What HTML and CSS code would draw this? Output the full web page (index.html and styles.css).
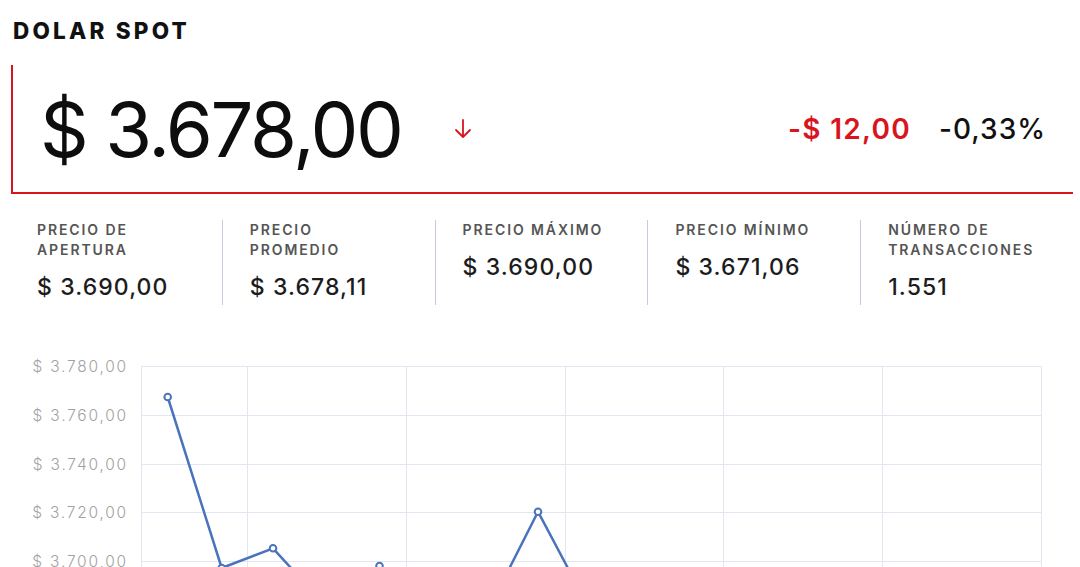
FILE: index.html
```html
<!DOCTYPE html>
<html lang="es">
<head>
    <meta charset="UTF-8">
    <meta name="viewport" content="width=device-width, initial-scale=1.0">
    <title>Dolar Spot</title>
    <link rel="stylesheet" href="styles.css">
</head>
<body>
    <main class="quote">
        <h1 class="quote-title">DOLAR SPOT</h1>

        <section class="price-box">
            <div class="price-main">$ 3.678,00</div>
            <svg class="price-arrow" width="22" height="24" viewBox="0 0 22 24">
                <path d="M11 3 V20 M4 13 L11 20 L18 13" fill="none" stroke="#d8141e" stroke-width="1.8" stroke-linecap="round" stroke-linejoin="round"/>
            </svg>
            <div class="price-change">
                <span class="change-abs">-$ 12,00</span>
                <span class="change-pct">-0,33%</span>
            </div>
        </section>

        <!-- Daily stats -->
        <section class="stats">
            <div class="stat">
                <div class="stat-label">PRECIO DE<br>APERTURA</div>
                <div class="stat-value">$ 3.690,00</div>
            </div>
            <div class="stat">
                <div class="stat-label">PRECIO<br>PROMEDIO</div>
                <div class="stat-value">$ 3.678,11</div>
            </div>
            <div class="stat">
                <div class="stat-label">PRECIO MÁXIMO</div>
                <div class="stat-value">$ 3.690,00</div>
            </div>
            <div class="stat">
                <div class="stat-label">PRECIO MÍNIMO</div>
                <div class="stat-value">$ 3.671,06</div>
            </div>
            <div class="stat">
                <div class="stat-label">NÚMERO DE<br>TRANSACCIONES</div>
                <div class="stat-value">1.551</div>
            </div>
        </section>

        <!-- Intraday chart -->
        <figure class="chart">
            <svg width="1080" height="300" viewBox="0 0 1080 300">
                <g class="grid" stroke="#e3e6f1" stroke-width="1" fill="none">
                    <line x1="141.5" y1="36.5" x2="1041.5" y2="36.5"/>
                    <line x1="141.5" y1="85.5" x2="1041.5" y2="85.5"/>
                    <line x1="141.5" y1="134.5" x2="1041.5" y2="134.5"/>
                    <line x1="141.5" y1="182.5" x2="1041.5" y2="182.5"/>
                    <line x1="141.5" y1="231.5" x2="1041.5" y2="231.5"/>
                    <line x1="141.5" y1="280.5" x2="1041.5" y2="280.5"/>
                    <line x1="141.5" y1="36.5" x2="141.5" y2="300"/>
                    <line x1="247.5" y1="36.5" x2="247.5" y2="300"/>
                    <line x1="406.5" y1="36.5" x2="406.5" y2="300"/>
                    <line x1="565.5" y1="36.5" x2="565.5" y2="300"/>
                    <line x1="723.5" y1="36.5" x2="723.5" y2="300"/>
                    <line x1="882.5" y1="36.5" x2="882.5" y2="300"/>
                    <line x1="1041.5" y1="36.5" x2="1041.5" y2="300"/>
                </g>
                <g class="axis-labels" text-anchor="end">
                    <text x="128" y="42">$ 3.780,00</text>
                    <text x="128" y="91">$ 3.760,00</text>
                    <text x="128" y="140">$ 3.740,00</text>
                    <text x="128" y="188">$ 3.720,00</text>
                    <text x="128" y="237">$ 3.700,00</text>
                    <text x="128" y="286">$ 3.680,00</text>
                </g>
                <polyline points="167.7,67 221.7,238 273,218.3 326.7,277 379.5,236 432.7,268 485.7,285 538,181.7 591.7,283"
                          fill="none" stroke="#4a73bd" stroke-width="2.5" stroke-linejoin="round"/>
                <g fill="#fff" stroke="#4a73bd" stroke-width="2">
                    <circle cx="167.7" cy="67" r="3.3"/>
                    <circle cx="221.7" cy="238" r="3.3"/>
                    <circle cx="273" cy="218.3" r="3.3"/>
                    <circle cx="326.7" cy="277" r="3.3"/>
                    <circle cx="379.5" cy="236" r="3.3"/>
                    <circle cx="432.7" cy="268" r="3.3"/>
                    <circle cx="485.7" cy="285" r="3.3"/>
                    <circle cx="538" cy="181.7" r="3.3"/>
                    <circle cx="591.7" cy="283" r="3.3"/>
                </g>
            </svg>
        </figure>
    </main>
</body>
</html>
```

FILE: styles.css
```css
body {
    margin: 0;
    padding: 0;
    background-color: #fff;
    color: #111;
    font-family: 'Inter', 'Liberation Sans', sans-serif;
}
.quote {
    display: flex;
    flex-direction: column;
}
.quote-title {
    margin: 17px 0 0 13px;
    font-size: 22.5px;
    line-height: 28px;
    font-weight: 800;
    letter-spacing: 3.2px;
    color: #111;
}
.price-box {
    display: flex;
    align-items: center;
    height: 129px;
    box-sizing: border-box;
    margin: 20px 7px 0 11px;
    padding: 0 27px 0 27px;
    border-left: 2px solid #d8141e;
    border-bottom: 2px solid #d8141e;
}
.price-main {
    font-size: 76px;
    line-height: 1;
    font-weight: 400;
    letter-spacing: -2.4px;
    color: #0d0d0d;
}
.price-arrow {
    margin-left: 50px;
}
.price-change {
    margin-left: auto;
    display: flex;
    align-items: center;
    gap: 28px;
    font-size: 28px;
    line-height: 1;
}
.change-abs {
    color: #d8141e;
    font-weight: 600;
    letter-spacing: 1.3px;
}
.change-pct {
    color: #111;
    font-weight: 500;
    letter-spacing: 1px;
}
.stats {
    display: flex;
    margin: 26px 7px 0 10px;
}
.stat {
    flex: 1;
    height: 85px;
    box-sizing: border-box;
    padding-left: 27px;
    border-right: 1px solid #c9cadd;
}
.stat:last-child {
    border-right: none;
}
.stat-label {
    font-size: 14px;
    line-height: 20px;
    font-weight: 600;
    letter-spacing: 1.9px;
    color: #555;
}
.stat-value {
    margin-top: 13px;
    font-size: 23px;
    line-height: 28px;
    font-weight: 500;
    letter-spacing: 1.1px;
    color: #1c1c1c;
}
.chart {
    margin: 25px 0 0 0;
}
.chart svg {
    display: block;
}
.axis-labels text {
    font-family: 'Inter', 'Liberation Sans', sans-serif;
    font-size: 15.5px;
    font-weight: 300;
    letter-spacing: 1.8px;
    fill: #a2a2a2;
}
```
